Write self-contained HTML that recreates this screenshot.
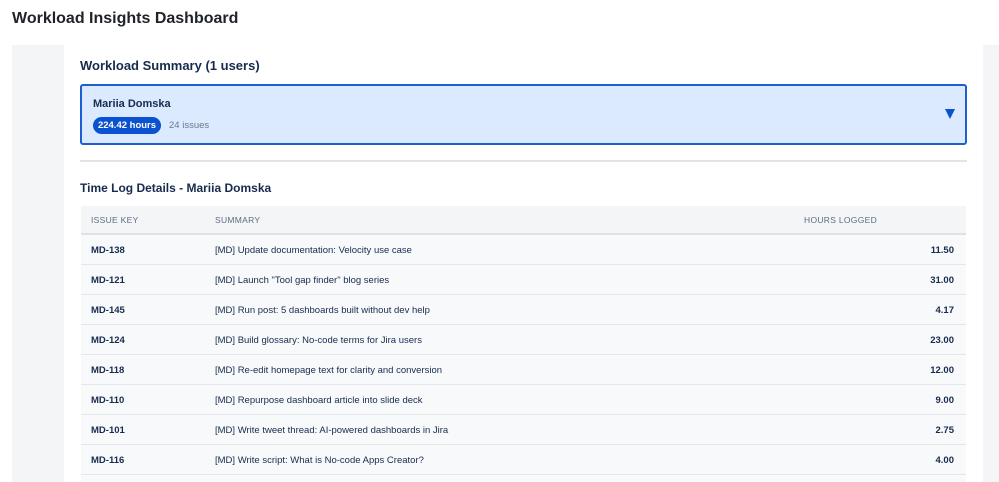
<!DOCTYPE html>
<html><head><style>
*{margin:0;padding:0;box-sizing:border-box}
html,body{width:999px;height:482px;overflow:hidden}
body{background:#fff;font-family:"Liberation Sans",Arial,sans-serif;color:#172b4d;position:relative}
h1{position:absolute;left:12px;top:10px;font-size:16px;font-weight:bold;color:#1f2328}
.gray{position:absolute;left:12px;top:45px;width:987px;height:437px;background:#f4f5f7}
.panel{position:absolute;left:64px;top:45px;width:919px;height:437px;background:#fff}
.h2{position:absolute;left:80px;top:58px;font-size:13px;font-weight:bold;color:#172b4d}
.card{position:absolute;left:80px;top:84px;width:887px;height:61px;background:#dbeafe;border:2px solid #1d5fd0;border-radius:3px}
.name{position:absolute;left:11px;top:12px;font-size:11px;font-weight:bold;color:#172b4d}
.pill{position:absolute;left:11px;top:31px;width:68px;height:17px;border-radius:9px;background:#0b52d0;color:#fff;font-size:9.5px;font-weight:bold;line-height:17px;text-align:center}
.iss{position:absolute;left:87px;top:34px;font-size:9.5px;color:#6b778c}
.arrow{position:absolute;right:10px;top:23px;width:0;height:0;border-left:5px solid transparent;border-right:5px solid transparent;border-top:10px solid #0b52d0}
.hr{position:absolute;left:80px;top:160px;width:887px;height:2px;background:#e1e3e6}
.h3{position:absolute;left:80px;top:181px;font-size:12px;font-weight:bold;color:#172b4d}
table{position:absolute;left:81px;top:206px;width:885px;border-collapse:collapse;font-size:9.5px}
th{height:28px;background:#f4f5f7;color:#5e6c84;font-weight:normal;text-align:left;font-size:8.5px;letter-spacing:0.3px;border-bottom:2px solid #dfe1e6}
td{height:30px;background:#f8f9fb;border-bottom:1px solid #e4e6ea;padding-top:3px}
th:first-child,td:first-child{padding-left:10px;width:134px}
td:first-child{font-weight:bold}
th:nth-child(3){width:162px}
td:nth-child(3){text-align:right;padding-right:12px;font-weight:bold}
</style></head><body>
<h1>Workload Insights Dashboard</h1>
<div class="gray"></div>
<div class="panel"></div>
<div class="h2">Workload Summary (1 users)</div>
<div class="card"><div class="name">Mariia Domska</div><div class="pill">224.42 hours</div><div class="iss">24 issues</div><div class="arrow"></div></div>
<div class="hr"></div>
<div class="h3">Time Log Details - Mariia Domska</div>
<table>
<tr><th>ISSUE KEY</th><th>SUMMARY</th><th>HOURS LOGGED</th></tr>
<tr><td>MD-138</td><td>[MD] Update documentation: Velocity use case</td><td>11.50</td></tr>
<tr><td>MD-121</td><td>[MD] Launch "Tool gap finder" blog series</td><td>31.00</td></tr>
<tr><td>MD-145</td><td>[MD] Run post: 5 dashboards built without dev help</td><td>4.17</td></tr>
<tr><td>MD-124</td><td>[MD] Build glossary: No-code terms for Jira users</td><td>23.00</td></tr>
<tr><td>MD-118</td><td>[MD] Re-edit homepage text for clarity and conversion</td><td>12.00</td></tr>
<tr><td>MD-110</td><td>[MD] Repurpose dashboard article into slide deck</td><td>9.00</td></tr>
<tr><td>MD-101</td><td>[MD] Write tweet thread: AI-powered dashboards in Jira</td><td>2.75</td></tr>
<tr><td>MD-116</td><td>[MD] Write script: What is No-code Apps Creator?</td><td>4.00</td></tr>
<tr><td></td><td></td><td></td></tr>
</table>
</body></html>
